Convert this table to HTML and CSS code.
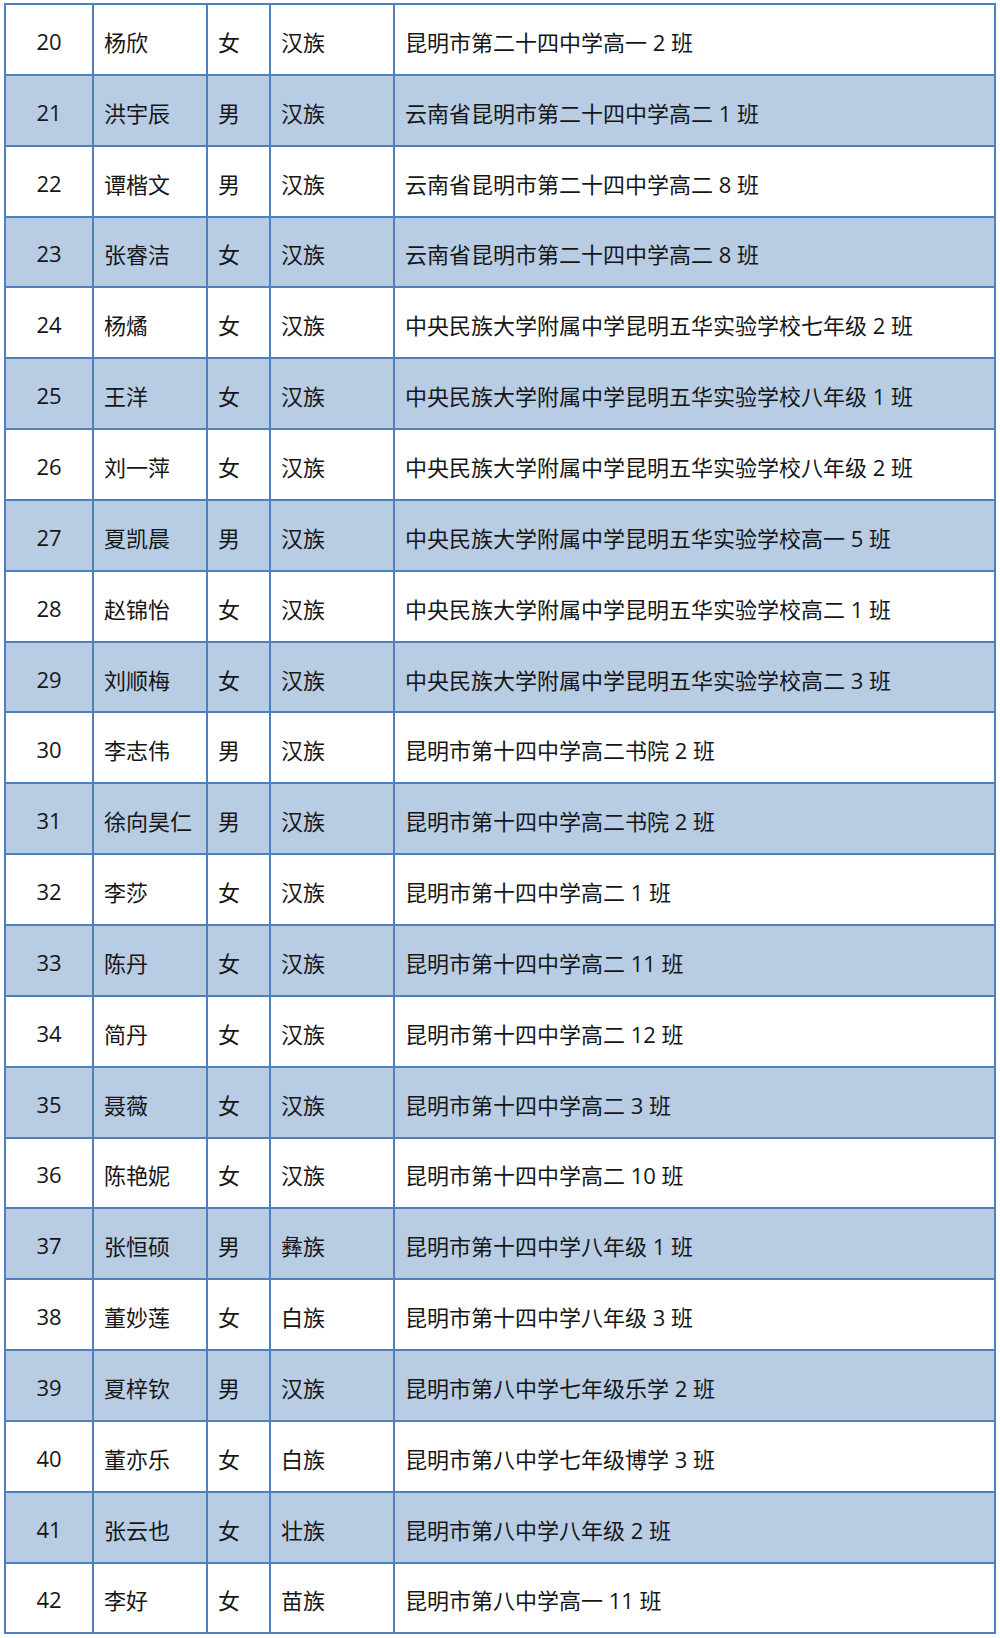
FILE: index.html
```html
<!DOCTYPE html>
<html lang="zh-CN">
<head>
<meta charset="utf-8">
<title>名单</title>
<link rel="stylesheet" href="styles.css">
</head>
<body>
<div class="sheet">
  <div class="row"><div class="c num">20</div><div class="c">杨欣</div><div class="c">女</div><div class="c">汉族</div><div class="c">昆明市第二十四中学高一 2 班</div></div>
  <div class="row alt"><div class="c num">21</div><div class="c">洪宇辰</div><div class="c">男</div><div class="c">汉族</div><div class="c">云南省昆明市第二十四中学高二 1 班</div></div>
  <div class="row"><div class="c num">22</div><div class="c">谭楷文</div><div class="c">男</div><div class="c">汉族</div><div class="c">云南省昆明市第二十四中学高二 8 班</div></div>
  <div class="row alt"><div class="c num">23</div><div class="c">张睿洁</div><div class="c">女</div><div class="c">汉族</div><div class="c">云南省昆明市第二十四中学高二 8 班</div></div>
  <div class="row"><div class="c num">24</div><div class="c">杨燏</div><div class="c">女</div><div class="c">汉族</div><div class="c">中央民族大学附属中学昆明五华实验学校七年级 2 班</div></div>
  <div class="row alt"><div class="c num">25</div><div class="c">王洋</div><div class="c">女</div><div class="c">汉族</div><div class="c">中央民族大学附属中学昆明五华实验学校八年级 1 班</div></div>
  <div class="row"><div class="c num">26</div><div class="c">刘一萍</div><div class="c">女</div><div class="c">汉族</div><div class="c">中央民族大学附属中学昆明五华实验学校八年级 2 班</div></div>
  <div class="row alt"><div class="c num">27</div><div class="c">夏凯晨</div><div class="c">男</div><div class="c">汉族</div><div class="c">中央民族大学附属中学昆明五华实验学校高一 5 班</div></div>
  <div class="row"><div class="c num">28</div><div class="c">赵锦怡</div><div class="c">女</div><div class="c">汉族</div><div class="c">中央民族大学附属中学昆明五华实验学校高二 1 班</div></div>
  <div class="row alt"><div class="c num">29</div><div class="c">刘顺梅</div><div class="c">女</div><div class="c">汉族</div><div class="c">中央民族大学附属中学昆明五华实验学校高二 3 班</div></div>
  <div class="row"><div class="c num">30</div><div class="c">李志伟</div><div class="c">男</div><div class="c">汉族</div><div class="c">昆明市第十四中学高二书院 2 班</div></div>
  <div class="row alt"><div class="c num">31</div><div class="c">徐向昊仁</div><div class="c">男</div><div class="c">汉族</div><div class="c">昆明市第十四中学高二书院 2 班</div></div>
  <div class="row"><div class="c num">32</div><div class="c">李莎</div><div class="c">女</div><div class="c">汉族</div><div class="c">昆明市第十四中学高二 1 班</div></div>
  <div class="row alt"><div class="c num">33</div><div class="c">陈丹</div><div class="c">女</div><div class="c">汉族</div><div class="c">昆明市第十四中学高二 11 班</div></div>
  <div class="row"><div class="c num">34</div><div class="c">简丹</div><div class="c">女</div><div class="c">汉族</div><div class="c">昆明市第十四中学高二 12 班</div></div>
  <div class="row alt"><div class="c num">35</div><div class="c">聂薇</div><div class="c">女</div><div class="c">汉族</div><div class="c">昆明市第十四中学高二 3 班</div></div>
  <div class="row"><div class="c num">36</div><div class="c">陈艳妮</div><div class="c">女</div><div class="c">汉族</div><div class="c">昆明市第十四中学高二 10 班</div></div>
  <div class="row alt"><div class="c num">37</div><div class="c">张恒硕</div><div class="c">男</div><div class="c">彝族</div><div class="c">昆明市第十四中学八年级 1 班</div></div>
  <div class="row"><div class="c num">38</div><div class="c">董妙莲</div><div class="c">女</div><div class="c">白族</div><div class="c">昆明市第十四中学八年级 3 班</div></div>
  <div class="row alt"><div class="c num">39</div><div class="c">夏梓钦</div><div class="c">男</div><div class="c">汉族</div><div class="c">昆明市第八中学七年级乐学 2 班</div></div>
  <div class="row"><div class="c num">40</div><div class="c">董亦乐</div><div class="c">女</div><div class="c">白族</div><div class="c">昆明市第八中学七年级博学 3 班</div></div>
  <div class="row alt"><div class="c num">41</div><div class="c">张云也</div><div class="c">女</div><div class="c">壮族</div><div class="c">昆明市第八中学八年级 2 班</div></div>
  <div class="row"><div class="c num">42</div><div class="c">李好</div><div class="c">女</div><div class="c">苗族</div><div class="c">昆明市第八中学高一 11 班</div></div>
</div>
</body>
</html>
```

FILE: styles.css
```css
html, body {
  margin: 0;
  padding: 0;
  background: #ffffff;
}

body {
  padding: 3px 0 0 4px;
  font-family: "Open Sans", "Noto Sans CJK SC", sans-serif;
  font-size: 22px;
  color: #161616;
}

.sheet {
  width: 992px;
  box-sizing: border-box;
  border-top: 2px solid #4f7fbd;
  border-left: 2px solid #4f7fbd;
  display: grid;
  grid-template-columns: 88px 114px 63px 124px 601px;
  grid-auto-rows: 70.85px;
}

.row {
  display: contents;
}

.c {
  box-sizing: border-box;
  border-right: 2px solid #4f7fbd;
  border-bottom: 2px solid #4f7fbd;
  display: flex;
  align-items: center;
  padding: 3px 0 0 10px;
  white-space: nowrap;
  background: #ffffff;
}

.alt .c {
  background: #b8cce4;
}

.c.num {
  justify-content: center;
  padding-left: 0;
}
```
